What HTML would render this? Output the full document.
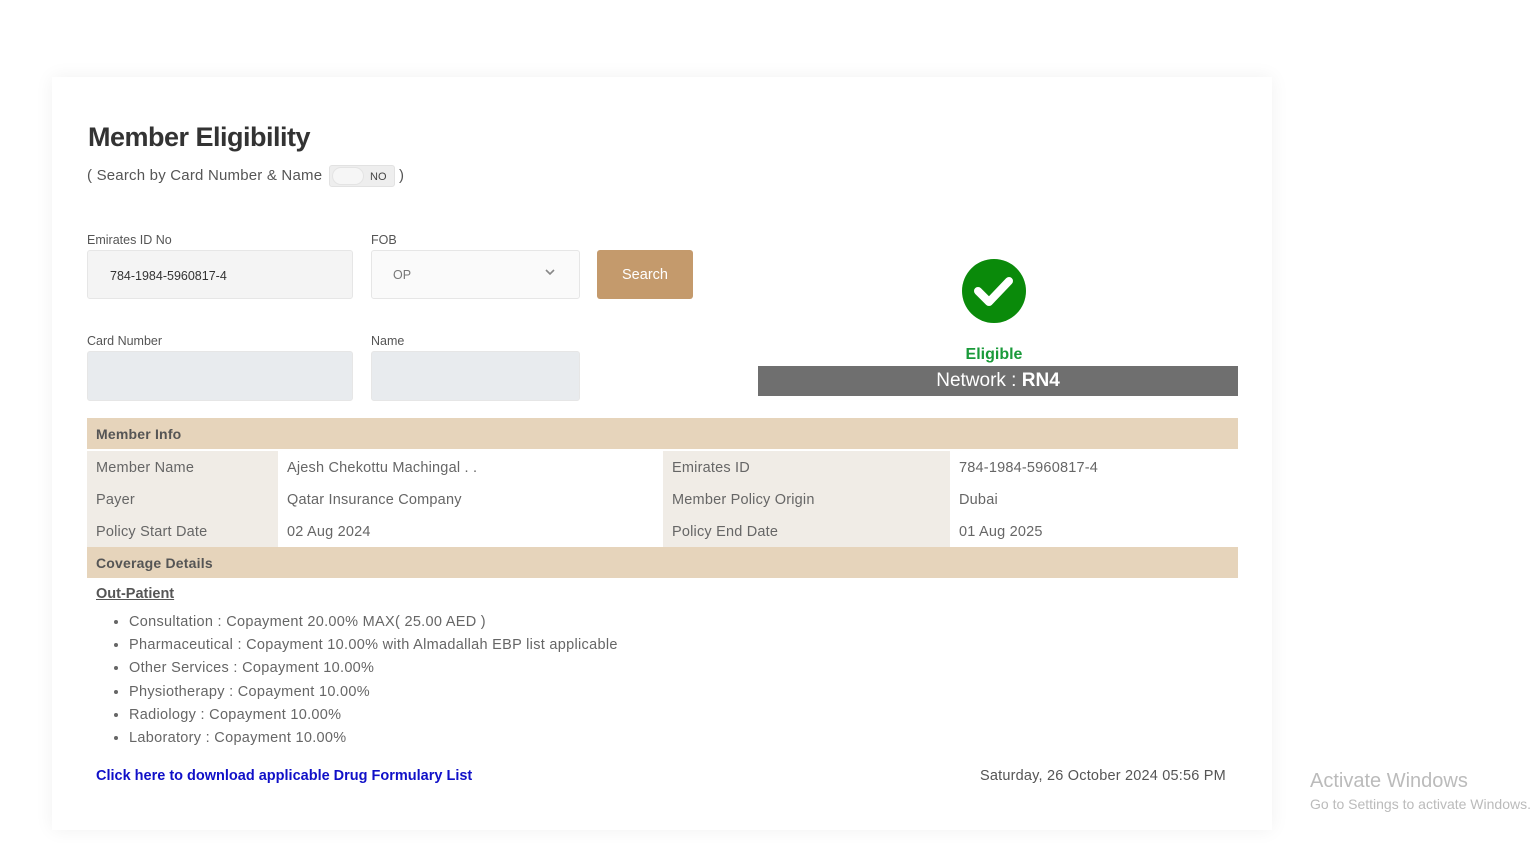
<!DOCTYPE html>
<html><head><style>
*{margin:0;padding:0;box-sizing:border-box}
body{width:1530px;height:843px;background:#fff;font-family:"Liberation Sans",sans-serif;position:relative;overflow:hidden;color:#666}
.card{position:absolute;left:52px;top:77px;width:1220px;height:753px;background:#fff;box-shadow:0 0 18px rgba(0,0,0,0.06)}
.a{position:absolute}
h1{position:absolute;left:88px;top:122px;font-size:27px;font-weight:bold;color:#333;letter-spacing:-0.5px}
.lbl{font-size:12.5px;color:#555}
.inp{border:1px solid #e6e6e6;border-radius:3px}
.row{position:absolute;left:87px;width:1151px;height:32px;font-size:14.5px;line-height:34px;letter-spacing:0.2px}
.row div{position:absolute;top:0;height:32px;padding-left:9px}
.hd{background:#e6d4bb;color:#555;font-weight:bold;font-size:14px}
.c1{left:0;width:191px;background:#f0ece6}
.c2{left:191px;width:385px}
.c3{left:576px;width:287px;background:#f0ece6}
.c4{left:863px;width:288px}
ul{position:absolute;left:129px;top:611px;font-size:14.5px;color:#666;list-style:disc;letter-spacing:0.3px}
li{height:23.2px;line-height:23px}
</style></head><body>
<div class="card"></div>
<h1>Member Eligibility</h1>
<div class="a" style="left:87px;top:167px;font-size:15px;color:#555;letter-spacing:0.2px">( Search by Card Number &amp; Name</div>
<div class="a" style="left:329px;top:165px;width:66px;height:22px;background:#eee;border:1px solid #e2e2e2;border-radius:3px"></div>
<div class="a" style="left:332px;top:167px;width:32px;height:18px;background:#f6f6f6;border-radius:9px;border:1px solid #e4e4e4"></div>
<div class="a" style="left:370px;top:171px;font-size:11px;color:#444">NO</div>
<div class="a" style="left:399px;top:167px;font-size:15px;color:#555">)</div>

<div class="a lbl" style="left:87px;top:233px">Emirates ID No</div>
<div class="a inp" style="left:87px;top:250px;width:266px;height:49px;background:#f4f4f4"></div>
<div class="a" style="left:110px;top:269px;font-size:12.5px;color:#333">784-1984-5960817-4</div>
<div class="a lbl" style="left:371px;top:233px">FOB</div>
<div class="a inp" style="left:371px;top:250px;width:209px;height:49px;background:#fafafa"></div>
<div class="a" style="left:393px;top:268px;font-size:12.5px;color:#777">OP</div>
<svg class="a" style="left:545px;top:268px" width="10" height="8"><path d="M1 2 L5 6 L9 2" stroke="#888" stroke-width="1.6" fill="none"/></svg>
<div class="a" style="left:597px;top:250px;width:96px;height:49px;background:#c49a6c;border-radius:3px;color:#fff;font-size:14.5px;text-align:center;line-height:51px">Search</div>

<div class="a lbl" style="left:87px;top:334px">Card Number</div>
<div class="a inp" style="left:87px;top:351px;width:266px;height:50px;background:#e8ebee"></div>
<div class="a lbl" style="left:371px;top:334px">Name</div>
<div class="a inp" style="left:371px;top:351px;width:209px;height:50px;background:#e8ebee"></div>

<svg class="a" style="left:961px;top:259px" width="66" height="66"><circle cx="33" cy="32" r="32" fill="#0a8a0a"/><path d="M17 32 L28 43 L48 22" stroke="#fff" stroke-width="8" fill="none" stroke-linecap="round" stroke-linejoin="round"/></svg>
<div class="a" style="left:754px;top:346px;width:480px;text-align:center;font-size:16px;font-weight:bold;color:#1a9a3a">Eligible</div>
<div class="a" style="left:758px;top:366px;width:480px;height:30px;background:#6f6f6f;color:#fff;text-align:center;font-size:19px;line-height:30px">Network : <b>RN4</b></div>

<div class="row hd" style="top:418px;height:31px;line-height:33px;padding-left:9px">Member Info</div>
<div class="row" style="top:451px"><div class="c1">Member Name</div><div class="c2">Ajesh Chekottu Machingal . .</div><div class="c3">Emirates ID</div><div class="c4">784-1984-5960817-4</div></div>
<div class="row" style="top:483px"><div class="c1">Payer</div><div class="c2">Qatar Insurance Company</div><div class="c3">Member Policy Origin</div><div class="c4">Dubai</div></div>
<div class="row" style="top:515px"><div class="c1">Policy Start Date</div><div class="c2">02 Aug 2024</div><div class="c3">Policy End Date</div><div class="c4">01 Aug 2025</div></div>
<div class="row hd" style="top:547px;height:31px;line-height:32px;padding-left:9px">Coverage Details</div>
<div class="a" style="left:96px;top:586px;font-size:14.5px;font-weight:bold;color:#555;text-decoration:underline">Out-Patient</div>
<ul>
<li>Consultation : Copayment 20.00% MAX( 25.00 AED )</li>
<li>Pharmaceutical : Copayment 10.00% with Almadallah EBP list applicable</li>
<li>Other Services : Copayment 10.00%</li>
<li>Physiotherapy : Copayment 10.00%</li>
<li>Radiology : Copayment 10.00%</li>
<li>Laboratory : Copayment 10.00%</li>
</ul>
<div class="a" style="left:96px;top:768px;font-size:14.5px;font-weight:bold;color:#1010c8">Click here to download applicable Drug Formulary List</div>
<div class="a" style="left:980px;top:768px;font-size:14.5px;color:#555;letter-spacing:0.2px">Saturday, 26 October 2024 05:56 PM</div>
<div class="a" style="left:1310px;top:770px;font-size:20px;color:#bbb;white-space:nowrap">Activate Windows</div>
<div class="a" style="left:1310px;top:796px;font-size:14px;color:#bbb;white-space:nowrap">Go to Settings to activate Windows.</div>
</body></html>
